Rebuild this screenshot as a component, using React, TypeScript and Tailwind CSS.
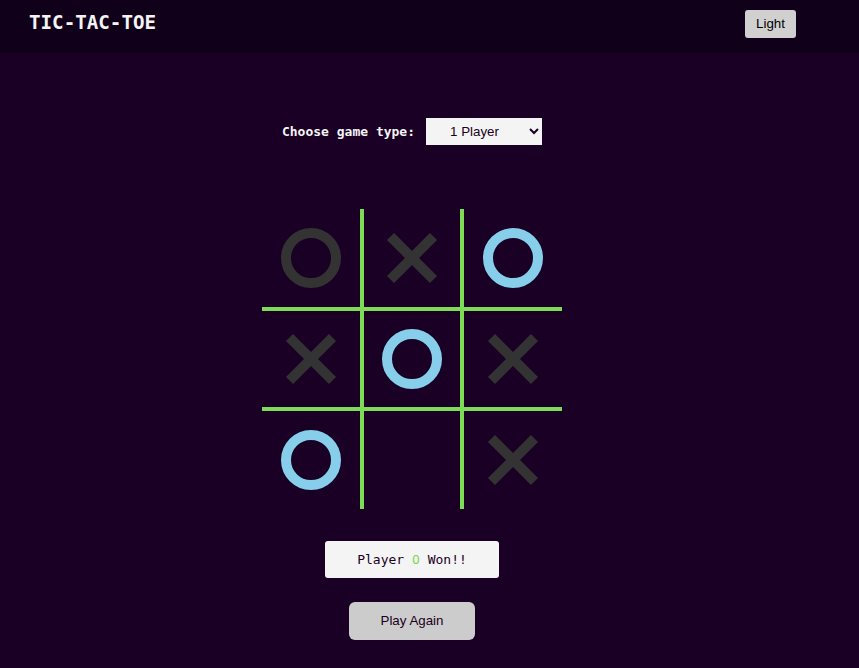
import React from 'react';

type Mark = 'X' | 'O' | '';

const board: { mark: Mark; win: boolean }[] = [
  { mark: 'O', win: false },
  { mark: 'X', win: false },
  { mark: 'O', win: true },
  { mark: 'X', win: false },
  { mark: 'O', win: true },
  { mark: 'X', win: false },
  { mark: 'O', win: true },
  { mark: '', win: false },
  { mark: 'X', win: false },
];

// inner borders only, 2px per side so shared lines are 4px
const cellBorders = [
  'border-r-2 border-b-2',
  'border-l-2 border-r-2 border-b-2',
  'border-l-2 border-b-2',
  'border-t-2 border-r-2 border-b-2',
  'border-2',
  'border-t-2 border-l-2 border-b-2',
  'border-t-2 border-r-2',
  'border-t-2 border-l-2 border-r-2',
  'border-t-2 border-l-2',
];

const MarkIcon: React.FC<{ mark: Mark; win: boolean }> = ({ mark, win }) => {
  const color = win ? '#87ceeb' : '#333333';
  if (mark === 'O') {
    return (
      <svg width="70" height="70" viewBox="0 0 70 70">
        <circle cx="35" cy="35" r="25" fill="none" stroke={color} strokeWidth="10" />
      </svg>
    );
  }
  if (mark === 'X') {
    return (
      <svg width="70" height="70" viewBox="0 0 70 70">
        <line x1="13.5" y1="13.5" x2="56.5" y2="56.5" stroke={color} strokeWidth="10" />
        <line x1="56.5" y1="13.5" x2="13.5" y2="56.5" stroke={color} strokeWidth="10" />
      </svg>
    );
  }
  return null;
};

const App: React.FC = () => {
  return (
    <div className="min-h-screen bg-[#190024] font-['Liberation_Sans',Arial,sans-serif]">
      {/* Header */}
      <header className="h-[53px] bg-[#10001a] flex items-center justify-between pl-[29px] pr-[63px]">
        <h1 className="text-[19.2px] font-bold text-[#f4f4f4] font-['DejaVu_Sans_Mono',monospace] leading-none -mt-[7px]">
          TIC-TAC-TOE
        </h1>
        <button className="w-[51px] h-[28px] bg-[#d0d0d0] rounded-[3px] text-[13.33px] text-black -mt-[5px]">
          Light
        </button>
      </header>

      <main className="flex flex-col items-center pt-[65px] pr-[35px]">
        {/* Game type */}
        <div className="flex items-center gap-[11px]">
          <label className="text-[13px] font-bold text-[#f4f4f4] font-['DejaVu_Sans_Mono',monospace]">
            Choose game type:
          </label>
          <select className="w-[116px] h-[27px] bg-[#f4f4f4] text-[#1a0022] text-[13.33px] pl-[20px] pr-[4px] border-0 outline-none">
            <option>1 Player</option>
            <option>2 Players</option>
          </select>
        </div>

        {/* Board */}
        <div className="mt-[64px] grid grid-cols-[100px_100px_100px] grid-rows-[100px_100px_100px]">
          {board.map((cell, i) => (
            <div
              key={i}
              className={`box-border border-[#7ddb55] flex items-center justify-center ${cellBorders[i]}`}
            >
              <MarkIcon mark={cell.mark} win={cell.win} />
            </div>
          ))}
        </div>

        {/* Status */}
        <div className="mt-[32px] w-[174px] h-[37px] bg-[#f4f4f4] rounded-[3px] flex items-center justify-center text-[13px] text-[#1a0022] font-['DejaVu_Sans_Mono',monospace]">
          Player&nbsp;<span className="text-[#7ddb55]">O</span>&nbsp;Won!!
        </div>

        <button className="mt-[24px] w-[126px] h-[38px] bg-[#cccccc] rounded-[6px] text-[13.33px] text-[#1a0022]">
          Play Again
        </button>
      </main>
    </div>
  );
};

export default App;
